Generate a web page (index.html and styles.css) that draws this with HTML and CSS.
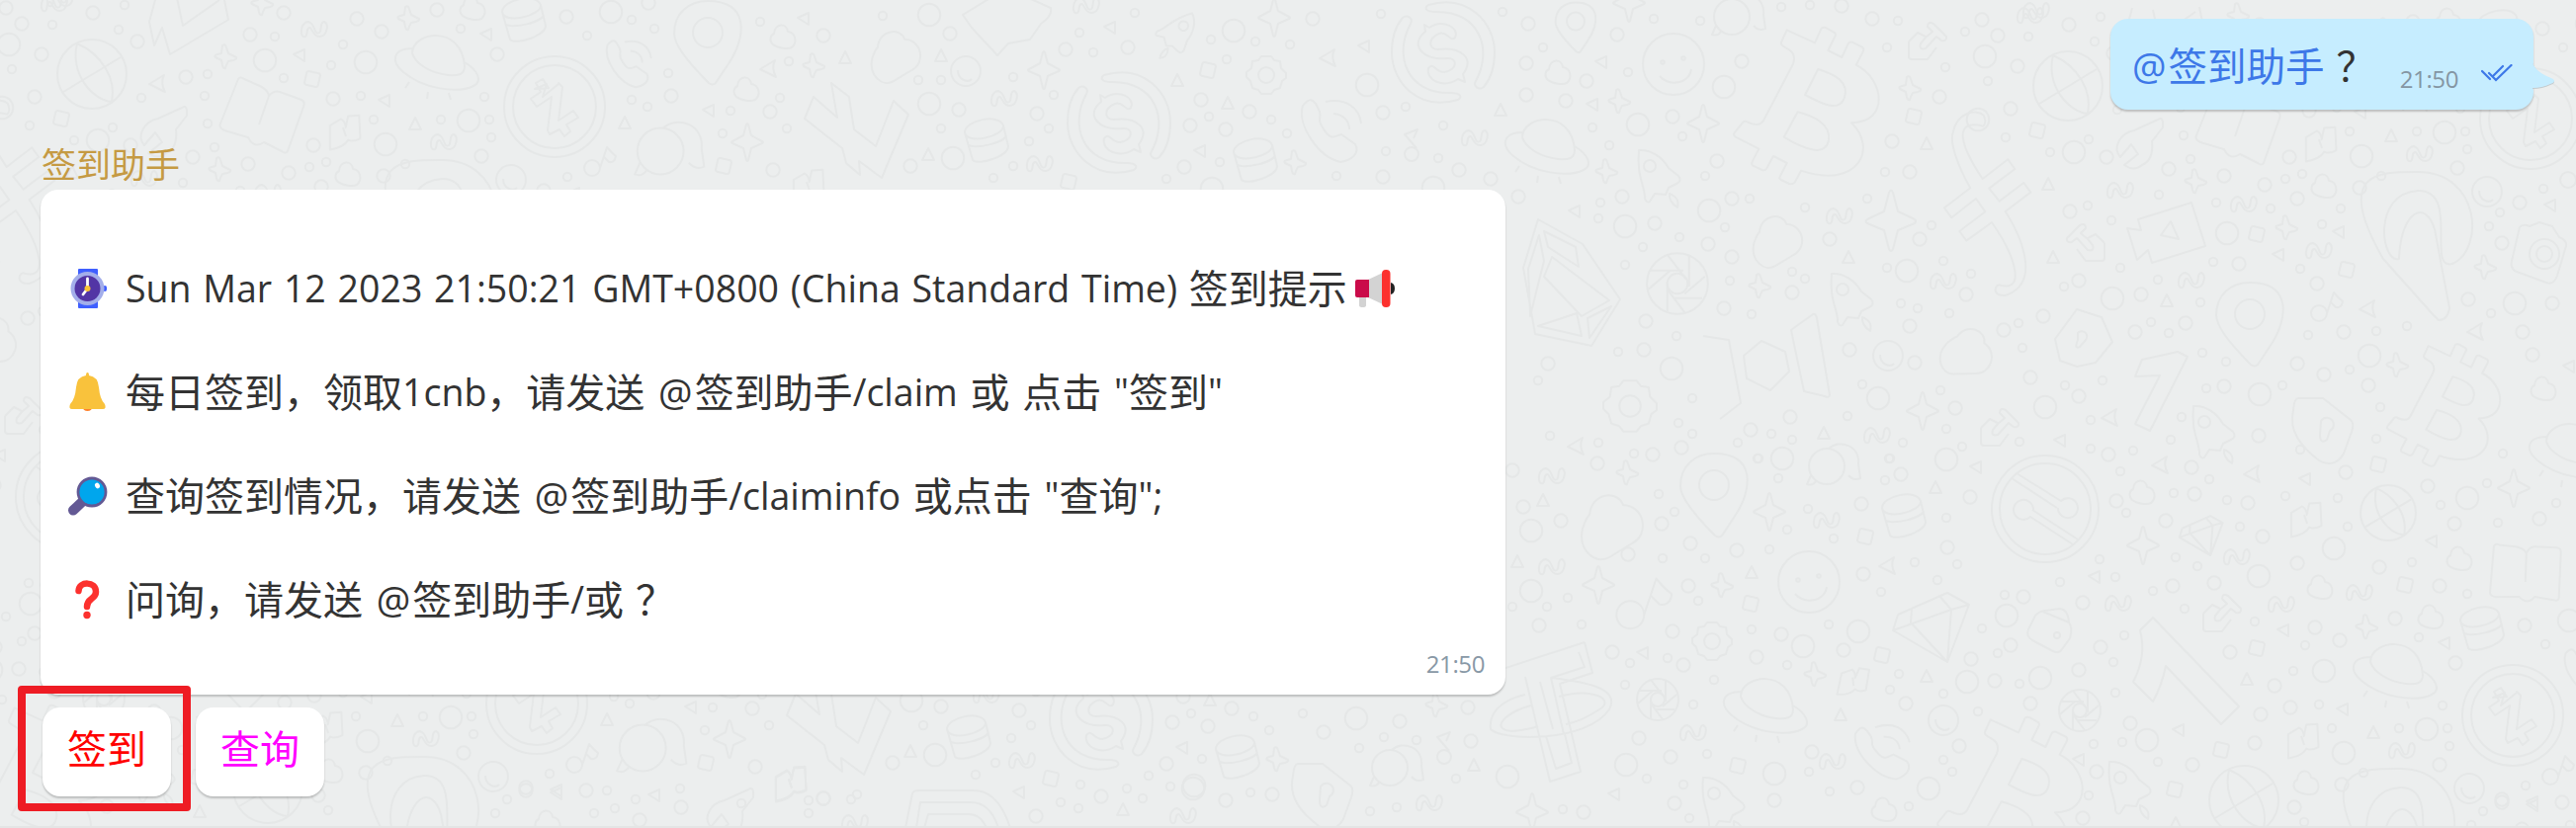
FILE: index.html
```html
<!DOCTYPE html>
<html lang="zh-CN">
<head>
<meta charset="utf-8">
<title>签到助手</title>
<link rel="stylesheet" href="styles.css">
</head>
<body>
<main class="chat">
<svg class="wallpaper" viewBox="0 0 2606 838" aria-hidden="true">
<defs>
<marker id="mS"><circle r="4.2"/></marker>
<marker id="mM"><circle r="6.7"/></marker>
<marker id="mL"><circle r="11.3"/></marker>
<marker id="mStar"><path d="M-3-11Q0-13 1-9L3-3Q7-1 11 1Q12 3 8 4L3 5Q1 8 0 12Q-2 13-3 9L-4 4L-10 1Q-12-1-8-2L-4-3Z"/></marker>
<marker id="mStarL"><path d="M-1-18Q0-20 1-18L4-7L15-1Q17 0 15 1L4 6L1 18Q0 20-1 18L-4 6L-15 1Q-17 0-15-1L-4-7Z"/></marker>
<marker id="mSq"><rect x="-7" y="-7" width="14" height="14" rx="2" transform="rotate(13)"/></marker>
<marker id="mTri"><path d="M0-6L6 6H-6Z"/></marker>
<marker id="mTriL"><path d="M-6-1L5-6V6Z"/></marker>
<marker id="mArr"><path d="M-8 1L7-8Q3 0 8 9Z"/></marker>
<marker id="mSqg"><path d="M-13 5C-14-3-9-9-4-6C1-3 0 7 5 4C8 2 5-7 10-7C15-5 13 7 6 8C-2 9-2-2-5-1C-9 0-6 6-9 8Q-12 9-13 5Z"/></marker>
<marker id="mCloud"><path d="M-9-3C-8-14 4-14 5-5C13-4 15 6 9 11C5 13-5 12-10 8C-14 4-13-1-9-3Z"/></marker>
<g id="cloudL"><path d="M-20-9C-18-32 9-34 14-19C36-18 41 11 23 20L0 34C-14 42-32 27-27 5C-25 0-24-5-20-9Z"/></g>
<g id="coinZ"><circle r="51"/><circle r="42"/><path d="M-20-18L-8-23L-12-10L4-23V-24L8-20L4 14L19 4L24 11L12 18L16 25L10 30L5 23L-5 28L-7 24L-3-10L-18 0L-24-8L-14-15L-19-24L-12-28L-6-19Z"/></g>
<g id="coinS"><path d="M-15-48C25-60 52-30 52 0C52 16 47 28 41 35C36 39 30 34 33 29C50-2 38-42-8-41C-17-41-20-45-15-48Z"/><path d="M15 48C-25 60-52 30-52 0C-52-16-47-28-41-35C-36-39-30-34-33-29C-50 2-38 42 8 41C17 41 20 45 15 48Z"/><path d="M-19-28L-14-25C0-34 17-25 12-15C7-10 4-22-4-19C-16-14-15-3-5-3C18-6 32 6 20 22L22 30L15 27C0 37-18 28-15 16C-9 9-9 20 1 20C15 18 15 5 4 6C-20 9-35-8-18-21Z"/></g>
<g id="globe"><circle r="35"/><path d="M-15-31C-22 0 0 26 20 28M-15-31C10-20 25 5 20 28M-29 18L29-17"/></g>
<g id="database"><path d="M-22-8C-22-20 12-28 17-15C18-4-20 5-22-8L-14 20C-8 26 22 16 22 6L17-15M-19 4C-12 10 19 2 20-5"/></g>
<g id="planet"><path d="M-26-8C-26-30 24-38 27 5C27 14 20 15 10 14C-8 12-23 2-26-8Z"/><path d="M-25-13C-46-13-48 0-35 11C-15 28 20 33 36 25C46 20 40 9 27 1M-29 21L-33 27M-10 31L-11 38M11 32L13 39"/></g>
<g id="pin"><path d="M0-41C42-41 40-5 20 24L8 42Q5 45 1 42C-15 26-34 5-34-8C-34-28-20-41 0-41Z"/><circle cy="-9" r="15"/></g>
<g id="smile"><circle r="31"/><circle cx="-11" cy="-2" r="1.8"/><circle cx="10" cy="-6" r="1.8"/><path d="M-14 12C-4 23 16 20 18 5"/></g>
<g id="smileS"><circle r="15"/><path d="M-8-1C-8 9 2 12 6 8"/></g>
<g id="gear"><path d="M-5-19H5L8-15L14-14L15-7L20-2V3L16 6L14 13L8 15L5 19H-5L-8 15L-14 13L-16 6L-20 2V-3L-15-7L-14-14L-8-15Z"/><circle r="8"/></g>
<g id="rocket"><path d="M-23-26C-12-27 0-20 7-8L17 0Q21 5 15 8L7 12L4 19L-7 18L-12 26Q-15 28-17 23C-16 12-26 0-23-26Z"/><circle cx="-12" cy="-10" r="6"/><path d="M8 18C18 22 17 28 16 32Q7 26 8 18Z"/></g>
<g id="phone"><path d="M-30-26C-22-36-18-32-13-20C-11-12-16-13-10-4C-2 10 2 5 9 3L23 13C28 22 20 29 8 31C-14 26-36-6-30-26Z"/><path d="M-7-30C14-34 27-24 29-8M1-18C11-17 17-11 17-2"/></g>
<g id="bookS"><path d="M-15-6L-5-14Q0-12 1-6L2-18L13-20L17 3Q10 8 5 6Q2 14-12 18Z" transform="rotate(7)"/><path d="M-1-6L2 3"/></g>
<g id="bookL"><path d="M-24-37Q-22-40-18-37L-2-30Q6-26 7-20Q12-26 18-24L40-16Q44-14 42-9L26 36Q24 39 20 36L2 27Q-8 34-14 22L-38 15Q-44 12-42 8ZM7-20L-3 9"/></g>
<g id="bubbles"><circle r="18" cx="-6" cy="0"/><path d="M-22 9L-26 18Q-20 20-17 15M-4-18C7-28 28-21 26-2L28 12Q21 15 16 9"/></g>
<g id="note"><circle cx="-9" cy="7" r="8"/><path d="M-1 7L6-14Q11-8 15-5Q14 2 8 1L3-4"/></g>
<g id="noteD"><circle cx="1" cy="9" r="7"/><path d="M6 3L-6-11L7-16L3-7"/></g>
<g id="trowel"><path d="M-19-1L-10-10L-2-6M9 5L0 17H-16Q-19 17-19 14V-1M-2-5L5-11L0-16Q0-22 6-19L19-6Q20-1 14-2L9-6L-2 6Q-9 8-7 1Z"/></g>
<g id="shield"><path d="M-29-29H-4L24-7Q28-4 25 5L17 27C10 40-2 38-8 34C-26 20-39 5-34-17Q-33-29-29-29Z"/><path d="M-6-6A7 7 0 1 1 3 4L0 13Q-7 18-7 8Z"/></g>
<g id="shutter"><circle r="21"/><circle r="7"/><path d="M-19-9H4M-7-20L6-3M8-19V2M19-5L5 7M17 10H-3M5 20L-7 4M-7 19V-1M-20 4L-5-9"/></g>
<g id="diamond"><path d="M-34-11L16-33L38-21L16 37L-39 5L-34-11M-20-17L-21-3L16 37L20-16L38-21M-39 5L20-16L8-30"/></g>
<g id="btc" transform="scale(.3333) translate(-330 -320)"><path d="M263 90L348 129L368 85Q375 80 385 85L408 98Q413 103 409 110L388 152L430 173L450 130Q458 124 466 129L493 143Q498 148 494 156L473 196C560 240 575 370 459 372C540 450 480 575 306 517L287 553Q280 560 270 557L245 545Q238 540 243 533L263 494L222 473L202 510Q196 518 188 515L160 502Q154 497 158 490L178 451L106 414Q100 408 104 402L130 370Q138 364 146 371Q180 385 192 365L282 193Q292 165 270 150L250 138Q243 132 247 125Z"/><path d="M358 209L318 287C370 315 420 340 437 298C455 250 410 225 358 209ZM296 339L254 415C320 455 380 475 390 425C398 375 340 350 296 339Z"/></g>

<!-- Cluster that occurs twice, one row apart -->
<g id="cluster">
<polyline class="s" points="466,29 490,98 365,97 378,121 446,121 495,121 497,139 410,166 574,179 594,36 639,20 662,29 769,22 798,62 676,74 639,101 655,108 739,112 789,99 796,130 731,135 893,16 1148,13 1092,33 1106,53 1025,78 929,81 952,81 1066,96 952,130 1061,130 1041,143 1025,168 1005,180 1180,181 1225,40 1270,42 1305,45 1241,60 1223,118 1286,121 1302,135 1234,164 885,200 836,206 768,209"/>
<polyline class="m" points="361,19 386,32 442,10 503,55 573,17 487,158 388,178 679,97 779,113 833,36 782,172 656,3 961,34 1078,50 970,111 1049,115 921,168 1141,48 1328,19 1215,101 1204,127 1240,131 1264,113 1198,169 550,193 851,204"/>
<polyline class="l" points="370,63 474,122 390,146 618,12 940,15 940,105 1248,31 1226,191 964,160"/>
<polyline class="star" points="413,18 823,66 1310,164"/>
<polyline class="starl" points="756,144 1289,18 1056,71"/>
<polyline class="sqg" points="449,143 1016,99 1052,165 1099,5"/>
<polyline class="tri" points="420,125 632,124 855,58 952,56 939,156 1191,81 1242,104"/>
<polyline class="tril" points="492,35 389,102 717,112 813,19 1123,28 1214,153 581,196"/>
<polyline class="arr" points="777,69"/>
<polyline class="sq" points="732,168 1222,71 1081,184"/>
<polyline class="cl" points="478,8 792,37 755,90 352,176"/>
<use href="#bookS" x="348" y="135"/><use href="#bookS" x="817" y="190"/>
<use href="#planet" x="443" y="62"/><use href="#coinZ" x="561" y="108"/>
<use href="#database" x="530" y="20"/><use href="#database" x="998" y="142"/><use href="#database" x="1270" y="162"/>
<use href="#phone" transform="translate(637 65) scale(.75)"/>
<use href="#pin" x="716" y="42"/><use href="#note" x="608" y="163"/><use href="#smileS" x="517" y="182"/><use href="#smileS" x="977" y="72"/>
<use href="#cloudL" transform="translate(904 55) scale(.8)"/>
<use href="#bubbles" transform="translate(676 153) scale(1.3)"/>
<use href="#rocket" transform="translate(1193 38) rotate(70) scale(.8)"/>
<use href="#coinS" x="1132" y="124"/><use href="#gear" x="1281" y="76"/>
<path d="M841 84L859 98L864 131L886 148L904 102L919 116L892 180L869 163L870 177L856 165L852 150L814 120L823 98L847 119Z"/>
<path d="M974 15L1018-12L1063 8Q1065 16 1053 24L1042 40L1020 44L1009 56L983 28Z"/>
<path d="M412 250C360 160 410 162 447 162C510 162 515 240 482 255C455 262 490 180 447 181C400 184 410 255 428 250C430 200 455 190 464 220L479 300Q477 312 468 312L462 306Z"/>
</g>

<g id="sheet">
<use href="#cluster"/><use href="#cluster" x="-18" y="604"/>
<polyline class="s" points="126,5 53,25 120,30 12,70 210,75 278,37 347,45 287,79 335,66 143,99 207,97 30,127 114,129 210,125 75,142 217,149 185,185 313,169 330,164 1422,108 1460,127 1402,153 1455,160 1352,178 1397,14 1520,12 1561,48 1647,73 1673,19 1611,129 1628,147 1702,138 1720,21 1619,205 1617,221 1662,250 1699,240 1644,268 1725,178 1696,340 1637,356 1556,385 1712,403 1907,174 1770,201 1826,210 1889,201 1954,228 1813,275 1826,282 1750,284 1909,271 1966,264 1994,277 1923,307 1940,312 1972,317 1772,318 1884,389 1963,395 1869,421 1969,434 1985,452 1925,448 1792,439 1813,445 1758,448 1778,464 1911,464 1745,230 1802,7 1831,5 1920,21 1909,48 1988,32 1968,68"/>
<polyline class="s" points="113,196 137,211 243,193 298,199 350,215 369,199 146,259 240,253 328,260 89,278 184,271 227,294 177,314 195,325 43,315 47,340 336,327 405,323 436,318 521,305 519,217 530,203 90,378 128,373 229,345 253,354 233,381 310,378 378,362 409,400 405,432 208,410 116,413 44,435 116,442 159,444 197,433 328,443 533,447"/>
<polyline class="s" points="1568,441 1617,448 1698,428 1712,439 1653,459 1678,500 1694,518 1799,484 1779,464 1808,536 1829,515 1855,545 1907,486 1912,464 1969,524 1790,556 1725,565 1682,565 1586,605 1565,614 1530,614 1937,569 1980,571 1960,587 1903,599 1718,608 1600,632 1772,637 1850,632 1808,673 1687,666 1649,671 1734,688 1644,693 1713,713 1921,682 1966,702 1912,698 1727,763 1830,781 1966,769 1975,781 1851,801 1703,794 1666,788 1931,816 1709,828 1581,819 1473,788 1433,749 1400,746 1375,757 1318,722 1386,821 1413,817"/>
<polyline class="s" points="146,465 236,473 200,487 254,494 152,507 267,521 313,490 366,492 376,521 470,499 517,477 528,517 587,497 125,554 202,552 224,561 141,572 179,586 85,577 29,590 6,624 22,649 44,680 2,708 150,631 139,658 141,689 211,604 282,617 333,641 321,667 119,741 148,739 184,759 114,793 441,557 497,589 332,820 861,809 818,823 1073,812 1091,818 1140,798 1156,808 1093,794 1184,796 1265,802 688,798 643,809 622,818 601,823 614,800 513,809 501,823"/>
<polyline class="m" points="94,13 22,24 42,55 139,42 188,78 253,35 287,13 35,98 337,100 132,147 195,159 251,166 292,175 317,147 1399,114 1399,179 1476,172 1508,181 1544,64 1544,96 1584,102 1605,82 1546,24 1636,35 1692,118 1641,199 1536,199 1674,226 1728,247 1665,325 1663,354 1566,368 1962,98 1914,143 1932,174 1752,201 1851,242 1942,242 1752,260 1813,296 1744,312 1989,298 1932,330 1871,354 1937,367 1811,422 1978,413 1771,435 1863,6 1894,19 2005,20 1762,62 1737,163"/>
<polyline class="m" points="95,202 325,189 532,234 266,255 345,275 104,272 167,286 68,308 28,322 161,324 212,315 498,291 583,295 553,324 372,324 563,347 55,370 104,389 251,379 352,367 325,356 397,378 286,429 218,461 134,448 1616,469 1672,460 1701,453 1530,476 1541,513 1579,527 1681,530 1710,550 1757,557 1647,561 1708,593 1883,510 1923,480 1885,581 1970,554 1993,503 1557,633 1692,639 1802,642 1631,660 1703,673 1777,665 1865,658 1485,716 1416,730 1339,741 1488,750 1658,747 1690,766 1833,761 1928,712 1982,755 1795,810 1879,797 1694,813 1602,822 1994,667"/>
<polyline class="m" points="221,488 142,495 192,515 275,497 290,531 241,578 199,581 325,558 374,466 457,480 484,518 570,513 408,562 469,581 108,598 48,592 35,641 126,643 104,666 19,677 55,700 156,720 257,648 302,682 288,711 318,704 282,740 219,762 122,769 108,816 322,805 833,808 689,817 647,830 593,800 532,800 1114,806 1048,826 1240,810 1287,804"/>
<polyline class="l" points="9,45 268,61 99,142 2,109 1383,86 1657,126 1644,229 1729,213 1691,373 1450,190 1929,274 1744,88 1900,403 1969,465 1803,464 254,224 138,290 545,295 398,348 287,387 70,400 1549,537 1549,598 1880,639 1824,654 1372,727 1645,774 1525,786 1795,783 1951,798 1990,690 362,543 286,571 31,611 65,674 173,737 497,492 1207,798"/>
<polyline class="star" points="265,3 228,57 222,171 1638,102 1625,173 1932,89 1780,289 314,218 515,258 426,357 1646,478 1742,592 1836,682 1453,713"/>
<polyline class="starl" points="1723,125 1648,3 1945,416 1790,518 1617,592 169,540 544,482 1550,822"/>
<path d="M1911 195Q1913 190 1915 195L1920 214L1937 222Q1939 224 1937 226L1920 233L1915 252Q1913 256 1911 252L1906 233L1889 226Q1886 224 1889 222L1906 214Z"/>
<polyline class="sqg" points="318,29 55,3 1492,139 1861,218 1966,284 1899,440 61,-2 146,180 271,194 347,241 218,271 1570,481 1570,573 1848,526 264,551 388,587 144,598 309,599 1713,741 1854,770 1446,812 865,832 1197,825"/>
<polyline class="tri" points="1518,111 1949,145 1870,260 1845,438 73,174 78,248 193,292 1535,568 1772,579 1958,493 1862,723 1949,684 1491,774 274,675 202,821 1136,819 1561,506"/>
<polyline class="tril" points="303,56 1380,47 1620,63 1611,106 1593,214 367,223 306,246 600,359 85,434 1662,661 1633,804 0,461 333,473 120,572 461,536 311,626 205,727 104,757 563,803 662,805 1031,802"/>
<polyline class="arr" points="159,84 396,300 505,323 135,410 186,458 1594,451 1909,572 279,467 1343,58"/>
<polyline class="sq" points="316,80 62,120 1936,118 284,225 375,261 407,458 1887,543 1771,611 1904,663 1758,775 434,580 284,644 248,747 201,787"/>
<polyline class="cl" points="1576,73 574,381 168,486 348,582 489,553 1906,819 554,832"/>
<use href="#globe" x="93" y="75"/><use href="#globe" x="271" y="798"/><use href="#globe" transform="translate(417 507) scale(.8)"/>
<path d="M158-4L151 22L156 46L164 28L172 55L231 20L226-5M179-2L185 26L222 0"/>
<use href="#bookL" x="265" y="117"/><use href="#bookL" transform="translate(556 568) rotate(-17) scale(.95)"/><use href="#bookS" x="333" y="515"/><use href="#bookS" transform="translate(1874 691) rotate(12) scale(.9)"/><use href="#bookS" x="799" y="795"/>
<path id="wrench" d="M184 109Q190 105 189 117L178 131Q180 150 168 155Q160 162 150 155L164 144L157 134L146 147C138 138 145 123 160 120Z"/>
<use href="#wrench" transform="translate(573 690)"/>
<use href="#coinS" x="1460" y="53"/><use href="#phone" x="1348" y="133"/><use href="#noteD" x="1427" y="147"/>
<use href="#pin" transform="translate(1594 27) scale(.6)"/><use href="#planet" x="1566" y="147"/>
<use href="#smile" x="1693" y="65"/><use href="#rocket" x="1681" y="178"/><use href="#rocket" x="1876" y="303"/><use href="#rocket" x="243" y="425"/><use href="#rocket" x="158" y="785"/><use href="#rocket" x="1746" y="813"/>
<path d="M1556 222L1601 247L1639 303L1610 350L1553 338L1541 271ZM1562 234L1594 250L1597 270L1566 250ZM1557 238L1562 264L1548 320L1546 272ZM1570 260L1628 304L1600 320L1562 280ZM1556 330L1595 317L1600 340ZM1606 322L1630 310L1608 342Z"/>
<use href="#shutter" transform="translate(1697 287) scale(1.47)"/><use href="#shutter" x="1677" y="708"/><use href="#shutter" x="105" y="707"/>
<use href="#gear" transform="translate(1649 411) scale(1.35)"/><use href="#gear" x="1732" y="649"/>
<g transform="translate(1830 107)"><use href="#btc"/></g>
<g transform="translate(37 793)"><use href="#btc"/></g>
<g transform="translate(475 398) scale(.78)"><use href="#btc"/></g>
<use href="#trowel" x="1950" y="43"/><use href="#bubbles" x="1758" y="17"/>
<use href="#cloudL" transform="translate(1796 242) scale(.8)"/><use href="#cloudL" transform="translate(1990 355) rotate(30) scale(.8)"/><use href="#cloudL" x="1628" y="530"/>
<g transform="translate(1720 0) scale(.3333)"><path d="M858 383C830 375 795 375 797 415C800 450 835 510 857 543L934 484L955 513L877 572L908 611L982 555L1003 584L926 642C970 710 1040 860 926 897C890 900 890 870 907 865C985 890 965 790 885 675L808 731L787 702L865 643L837 603L763 661L741 631L820 571C780 500 755 430 768 400C780 340 840 330 860 350C868 365 865 380 858 383Z"/></g>
<path d="M1723 340L1749 344L1761 408L1740 424M1764 360L1782 345L1806 356L1810 376L1791 395L1767 383ZM1812 334L1834 318Q1837 317 1838 322L1851 400Q1850 403 1846 401L1825 396Z"/>
<use href="#smileS" x="1910" y="360"/><use href="#smileS" x="1966" y="729"/>
<use href="#bubbles" x="1854" y="472"/><use href="#bubbles" x="1412" y="777"/><use href="#database" x="1926" y="522"/>
<use href="#trowel" transform="translate(111 235) scale(-1 1)"/><use href="#trowel" x="24" y="422"/><use href="#trowel" x="249" y="610"/>
<path d="M218 193L164 210L167 221L153 219L163 251L174 241L178 254L232 237ZM197 212L205 230L187 226Z"/>
<use href="#pin" x="277" y="315"/><use href="#pin" x="1734" y="500"/>
<path d="M102 301L127 309L138 334L121 355L102 359L85 353L80 331ZM103 325A5 5 0 1 1 111 332L105 339Q99 342 103 332ZM168 352L204 344L214 349L176 424L161 417L186 368L161 369Z"/>
<use href="#shield" x="355" y="420"/><use href="#shield" x="1342" y="802"/>
<path d="M550 218Q553 214 560 217L570 213L583 217L590 228Q600 232 596 240L588 267Q584 277 577 274L547 263Q540 260 542 252Z"/><circle cx="575" cy="245" r="15"/><circle cx="575" cy="245" r="8"/>
<use href="#note" x="356" y="298"/><use href="#noteD" x="1460" y="757"/>
<g transform="translate(1665 610) scale(1.75)"><use href="#note"/></g>
<use href="#planet" x="603" y="443"/><use href="#planet" x="1787" y="713"/><use href="#smile" x="1830" y="589"/>
<path d="M1603 650L1611 681L1578 692L1599 781L1568 791L1543 685M1603 650L1520 677M1597 660L1603 675L1569 686L1582 743M1558 690L1571 738M1569 686C1600 690 1640 695 1628 718C1605 752 1520 750 1508 738C1505 715 1530 706 1543 703M1577 705C1610 695 1635 708 1618 718Q1600 730 1584 733M1549 714C1525 720 1505 738 1530 740Q1548 738 1556 735M1564 745L1574 778L1590 772L1583 743"/>
<use href="#phone" transform="translate(1907 762) rotate(-8) scale(.9)"/><use href="#diamond" x="1954" y="633"/><use href="#diamond" transform="translate(228 529) scale(.57)"/>
<g transform="translate(70 503)"><circle r="54"/><circle r="46"/><path d="M-34-31L12-1M-29-36L16-8A10 10 0 1 1 13-1M33 31L-13 1M28 36L-15 8A10 10 0 1 1-12 1"/></g>
<path d="M60 611Q63 607 70 606L85 604Q93 605 94 618Q98 624 95 634L87 645Q84 650 78 647L57 636Q50 632 53 625ZM68 607L94 618"/><circle cx="82" cy="631" r="3"/>
<path d="M179 613L266 703L248 721L192 662Q188 682 179 698L159 678Q173 652 166 626Z"/>
<path d="M916 838L923 803Q924 800 930 800H985Q1010 800 1022 838M927 838L931 812H982Q1002 812 1010 838M935 838L939 824H980Q992 824 998 838"/>
</g>
</defs>
<g class="doodles"><use href="#sheet"/><use href="#sheet" x="1999" y="12"/><use href="#sheet" x="-1999" y="-12"/></g>
</svg>

<section class="row row-out">
<div class="bubble bubble-out">
<span class="body"><a class="mention"><span class="at">@</span>签到助手</a><span class="ask">？</span></span>
<span class="meta"><time>21:50</time>
<svg class="ticks" viewBox="0 0 32 18"><path d="M1 7L9 15M8 9L15 16L30.500 1M12 12L22 2"/></svg></span>
<svg class="tail" viewBox="0 0 23 27"><path class="tail-shade" d="M0 0C4 10 14 14 21 17Q24 20 18 22Q10 26 0 26Z"/><path d="M0 0C4 9 14 13 21 16Q24 19 18 21Q10 25 0 25Z"/></svg>
</div>
</section>

<section class="incoming">
<div class="sender">签到助手</div>
<div class="bubble bubble-in">
<p class="line"><svg class="emoji" viewBox="0 0 40 40"><rect x="10" y="0" width="20" height="40" rx="1" fill="#3f5fff"/><rect x="35" y="17" width="4" height="6" rx="2" fill="#3f5fff"/><circle cx="19.500" cy="20" r="17" fill="#a3aeea"/><circle cx="19.500" cy="20" r="13" fill="#5235a5"/><path d="M19.500 20V10M19.500 20L15 26" stroke="#fff" stroke-width="2.800" stroke-linecap="round"/><circle cx="19.500" cy="20" r="3" fill="#fcc436"/></svg><span class="lat wide">Sun Mar 12 2023 21:50:21 GMT+0800 (China Standard Time) </span>签到提示<svg class="emoji horn" viewBox="0 0 40 40"><path d="M36 14Q40 15 40 20T36 26Z" fill="#222"/><path d="M4 28H11V37Q11 39 7.500 39T4 37Z" fill="#d3d3d3"/><path d="M13 11L28 4V36L13 29Z" fill="#d3d3d3"/><path d="M2 11H14V29H2Q0 29 0 27V13Q0 11 2 11Z" fill="#ca0b4a"/><rect x="27" y="1" width="8.500" height="38" rx="4" fill="#fc312e"/></svg></p>
<p class="line"><svg class="emoji" viewBox="0 0 40 40"><path d="M14 34H25Q24 39 19.500 39T14 34Z" fill="#ff822d"/><path d="M18 3Q18 0 19.500 0T21 3Q30 4 31 15Q32 27 37 32Q39 37 35 37H4Q0 37 2 32Q7 27 8 15Q9 4 18 3Z" fill="#f9c23c"/></svg>每日签到，领取<span class="lat">1cnb</span>，请发送<span class="lat"> </span><span class="at">@</span>签到助手<span class="lat">/claim </span>或<span class="lat"> </span>点击<span class="lat"> "</span>签到<span class="lat">"</span></p>
<p class="line"><svg class="emoji" viewBox="0 0 40 40"><path d="M13 27L5 34.500" stroke="#635994" stroke-width="10" stroke-linecap="round"/><circle cx="24" cy="16" r="14" fill="#00a6ed" stroke="#635994" stroke-width="2.800"/><ellipse cx="29.500" cy="9.500" rx="2.300" ry="3" transform="rotate(-30 29.500 9.500)" fill="#fff"/></svg>查询签到情况，请发送<span class="lat"> </span><span class="at">@</span>签到助手<span class="lat">/claiminfo </span>或点击<span class="lat"> "</span>查询<span class="lat">";</span></p>
<p class="line"><svg class="emoji" viewBox="0 0 40 40"><path d="M10.500 11C11 1 28 1 28 12C28 20 19 18 19 27" fill="none" stroke="#fc312e" stroke-width="6.500" stroke-linecap="round"/><circle cx="19" cy="35.500" r="3.700" fill="#fc312e"/></svg>问询，请发送<span class="lat"> </span><span class="at">@</span>签到助手<span class="lat">/</span>或<span class="ask">？</span></p>
<time class="stamp">21:50</time>
</div>
<div class="actions">
<div class="action-wrap"><button class="action red">签到</button><span class="highlight"></span></div>
<button class="action magenta">查询</button>
</div>
</section>
</main>
</body>
</html>
```
FILE: styles.css
```css
* { box-sizing: border-box; }
html, body { height: 838px; overflow: hidden; }
body { margin: 0; font-family: "Open Sans", "Noto Sans CJK SC", sans-serif; color: #333; }
.chat { position: relative; height: 838px; overflow: hidden; background: #eceeee; border-bottom: 2px solid #e4e5e5; }

.wallpaper { position: absolute; inset: 0; width: 2606px; height: 838px; }
.doodles { fill: none; }
.wallpaper path, .wallpaper circle, .wallpaper rect { fill: none; stroke: #e5e7e7; stroke-width: 2px; vector-effect: non-scaling-stroke; stroke-linejoin: round; }
.wallpaper polyline { fill: none; stroke: none; stroke-width: 1px; }
.wallpaper marker { overflow: visible; }
.s { marker: url(#mS); }
.m { marker: url(#mM); }
.l { marker: url(#mL); }
.star { marker: url(#mStar); }
.starl { marker: url(#mStarL); }
.sq { marker: url(#mSq); }
.tri { marker: url(#mTri); }
.tril { marker: url(#mTriL); }
.arr { marker: url(#mArr); }
.sqg { marker: url(#mSqg); }
.cl { marker: url(#mCloud); }

.bubble { position: relative; border-radius: 18px; box-shadow: 0 2px 2px rgba(0, 0, 0, .2); }
.row-out { display: flex; justify-content: flex-end; padding: 19px 43px 0 0; }
.bubble-out { display: flex; justify-content: space-between; width: 428px; height: 92px; padding: 0 21px 0 21px; background: #c6edff; }
.body { font-size: 39.500px; line-height: 96px; white-space: nowrap; }
.mention { color: #3d78e8; }
.lat { font-size: 37.500px; white-space: pre; word-spacing: 3px; }
.wide { word-spacing: 2px; }
.at { font-size: 38.500px; margin: 0 2px 0 1px; }
.ask { display: inline-block; width: 40px; text-indent: 12px; }
.meta { display: flex; align-items: center; gap: 23px; height: 92px; padding-top: 30px; margin-left: -20px; }
time { font-size: 24px; line-height: 28px; color: #8898a6; letter-spacing: -.4px; }
.meta time { color: #8496a3; }
.ticks { width: 32px; height: 18px; margin-top: -12px; fill: none; stroke: #3d78e8; stroke-width: 2.200px; stroke-linecap: round; }
.tail { position: absolute; left: 427px; top: 45px; width: 23px; height: 27px; fill: #c6edff; overflow: visible; }
.tail-shade { fill: #c3cacd; }

.incoming { position: relative; padding: 32px 0 0 41px; }
.sender { height: 49px; padding-left: 1px; font-size: 35px; line-height: 48px; color: #c59a43; }
.bubble-in { display: flex; flex-direction: column; width: 1482px; height: 511px; padding: 47px 21px 15px 28px; background: #fff; }
.line { display: flex; align-items: center; height: 105px; flex: none; margin: 0; font-size: 40px; line-height: 60px; white-space: nowrap; }
.emoji { flex: none; width: 40px; height: 40px; margin-right: 18px; }
.horn { margin: 0 0 0 8px; }
.stamp { align-self: flex-end; margin-top: -1px; }
.actions { display: flex; gap: 25px; padding: 13px 0 0 2px; }
.action-wrap { position: relative; }
.action { display: block; width: 130px; height: 90px; padding: 0 0 6px; border: 0; border-radius: 18px; background: #fff; box-shadow: 0 2px 2px rgba(0, 0, 0, .2); font: 40px/84px "Open Sans", "Noto Sans CJK SC", sans-serif; }
.red { color: #f00; }
.magenta { color: #f0f; }
.highlight { position: absolute; left: -25px; top: -22px; width: 175px; height: 127px; border: 8px solid #ee1c24; border-radius: 4px; }
```
